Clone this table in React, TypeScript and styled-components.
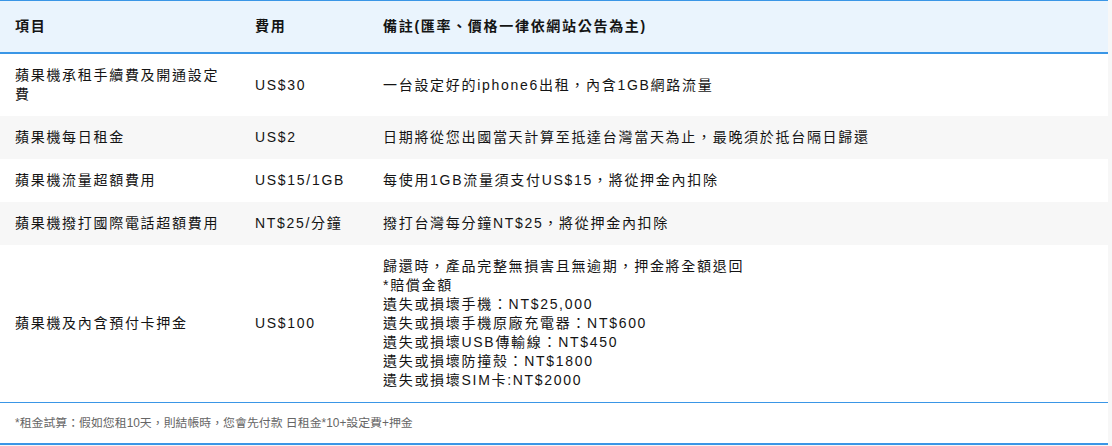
import React from "react";
import styled, { createGlobalStyle } from "styled-components";

const GlobalStyle = createGlobalStyle`
  html, body {
    margin: 0;
    padding: 0;
    background: #f7f7f7;
  }
  body {
    font-family: "Liberation Sans", Arial, "Noto Sans CJK TC", sans-serif;
  }
`;

const Table = styled.table`
  width: 1108px;
  border-collapse: collapse;
  background: #ffffff;
  border-top: 1px solid #3a96e6;
  font-size: 14px;
  line-height: 19px;
  letter-spacing: 1.7px;
  color: #141414;
`;

const HeadRow = styled.tr`
  background: #eaf4fd;
  border-bottom: 2px solid #3a96e6;
`;

const Th = styled.th<{ $w?: number }>`
  text-align: left;
  font-weight: bold;
  padding: 16px 15px 16px 15px;
  height: 19px;
  ${(p) => (p.$w ? `width: ${p.$w}px;` : "")}
  box-sizing: content-box;
`;

const Row = styled.tr<{ $alt?: boolean }>`
  background: ${(p) => (p.$alt ? "#f7f7f7" : "#ffffff")};
`;

const Td = styled.td`
  padding: 12px 15px;
  vertical-align: middle;
  text-align: left;
`;

const NoteLine = styled.div`
  white-space: nowrap;
`;

const FootRow = styled.tr`
  border-top: 1px solid #3a96e6;
  border-bottom: 2px solid #3a96e6;
`;

const FootCell = styled.td`
  padding: 11px 15px 11px 15px;
  font-size: 11.9px;
  line-height: 18px;
  letter-spacing: 0px;
  color: #666666;
`;

type Item = { name: string; fee: string; notes: string[] };

const items: Item[] = [
  {
    name: "蘋果機承租手續費及開通設定費",
    fee: "US$30",
    notes: ["一台設定好的iphone6出租，內含1GB網路流量"],
  },
  {
    name: "蘋果機每日租金",
    fee: "US$2",
    notes: ["日期將從您出國當天計算至抵達台灣當天為止，最晚須於抵台隔日歸還"],
  },
  {
    name: "蘋果機流量超額費用",
    fee: "US$15/1GB",
    notes: ["每使用1GB流量須支付US$15，將從押金內扣除"],
  },
  {
    name: "蘋果機撥打國際電話超額費用",
    fee: "NT$25/分鐘",
    notes: ["撥打台灣每分鐘NT$25，將從押金內扣除"],
  },
  {
    name: "蘋果機及內含預付卡押金",
    fee: "US$100",
    notes: [
      "歸還時，產品完整無損害且無逾期，押金將全額退回",
      "*賠償金額",
      "遺失或損壞手機：NT$25,000",
      "遺失或損壞手機原廠充電器：NT$600",
      "遺失或損壞USB傳輸線：NT$450",
      "遺失或損壞防撞殼：NT$1800",
      "遺失或損壞SIM卡:NT$2000",
    ],
  },
];

export default function App() {
  return (
    <>
      <GlobalStyle />
      <Table>
        <thead>
          <HeadRow>
            <Th $w={210}>項目</Th>
            <Th $w={98}>費用</Th>
            <Th>備註(匯率、價格一律依網站公告為主)</Th>
          </HeadRow>
        </thead>
        <tbody>
          {items.map((it, i) => (
            <Row key={it.name} $alt={i % 2 === 1}>
              <Td>{it.name}</Td>
              <Td>{it.fee}</Td>
              <Td>
                {it.notes.map((n) => (
                  <NoteLine key={n}>{n}</NoteLine>
                ))}
              </Td>
            </Row>
          ))}
        </tbody>
        <tfoot>
          <FootRow>
            <FootCell colSpan={3}>
              *租金試算：假如您租10天，則結帳時，您會先付款 日租金*10+設定費+押金
            </FootCell>
          </FootRow>
        </tfoot>
      </Table>
    </>
  );
}
